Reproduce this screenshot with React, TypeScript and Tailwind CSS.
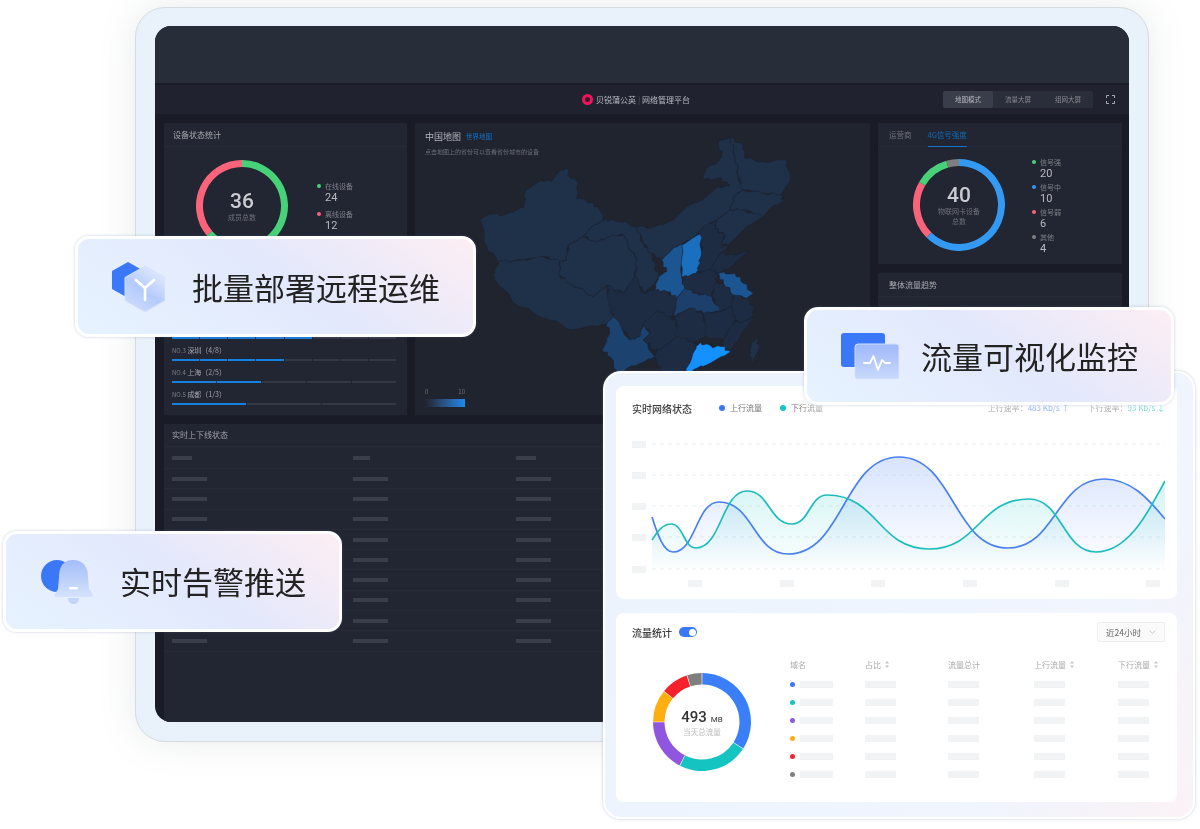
import React from "react";

// polar helpers for the ring charts
function arc(cx: number, cy: number, r: number, a0: number, a1: number) {
  const p = (a: number) => {
    const t = ((a - 90) * Math.PI) / 180;
    return `${(cx + r * Math.cos(t)).toFixed(2)} ${(cy + r * Math.sin(t)).toFixed(2)}`;
  };
  return `M ${p(a0)} A ${r} ${r} 0 ${a1 - a0 > 180 ? 1 : 0} 1 ${p(a1)}`;
}

function Ring({ size, width, parts, gap = 0 }: { size: number; width: number; parts: [number, number, string][]; gap?: number }) {
  const c = size / 2;
  const r = c - width / 2;
  return (
    <svg width={size} height={size} className="block">
      {parts.map(([a, b, color]) => (
        <path key={color} d={arc(c, c, r, a + gap, b - gap)} fill="none" stroke={color} strokeWidth={width} />
      ))}
    </svg>
  );
}

function smooth(pts: number[][]) {
  let d = `M ${pts[0][0]} ${pts[0][1]}`;
  for (let i = 1; i < pts.length; i++) {
    const [x0, y0] = pts[i - 1];
    const [x1, y1] = pts[i];
    const dx = x1 - x0;
    const dy = y1 - y0;
    const c1 = i === 1 ? [x0 + dx * 0.2, y0 + dy * 0.35] : [x0 + dx / 2, y0];
    const c2 = i === pts.length - 1 ? [x1 - dx * 0.2, y1 - dy * 0.35] : [x1 - dx / 2, y1];
    d += ` C ${c1[0]} ${c1[1]}, ${c2[0]} ${c2[1]}, ${x1} ${y1}`;
  }
  return d;
}

const blueLine = [[652, 517], [673, 552], [719, 502], [788, 554], [899, 457], [1008, 548], [1104, 479], [1165, 519]];
const tealLine = [[652, 540], [671, 524], [696, 548], [747, 491], [792, 524], [827, 495], [929, 549], [1029, 499], [1096, 552], [1165, 481]];

function TrafficChart() {
  return (
    <svg width={533} height={160} viewBox="632 430 533 160" className="block">
      <defs>
        <linearGradient id="blueFill" x1="0" y1="0" x2="0" y2="1">
          <stop offset="0" stopColor="#3b78f6" stopOpacity="0.2" />
          <stop offset="1" stopColor="#3b78f6" stopOpacity="0" />
        </linearGradient>
        <linearGradient id="tealFill" x1="0" y1="0" x2="0" y2="1">
          <stop offset="0" stopColor="#14c4c0" stopOpacity="0.18" />
          <stop offset="1" stopColor="#14c4c0" stopOpacity="0.01" />
        </linearGradient>
      </defs>
      {[444, 475, 506, 537, 569].map((y) => (
        <g key={y}>
          <rect x={632} y={y - 3} width={14} height={7} fill="#f2f3f5" />
          <line x1={652} x2={1165} y1={y} y2={y} stroke="#eceef1" strokeDasharray="4 4" />
        </g>
      ))}
      {[688, 780, 871, 963, 1055, 1146].map((x) => (
        <rect key={x} x={x} y={580} width={14} height={7} fill="#f2f3f5" />
      ))}
      <path d={`${smooth(blueLine)} L 1165 569 L 652 569 Z`} fill="url(#blueFill)" />
      <path d={`${smooth(tealLine)} L 1165 569 L 652 569 Z`} fill="url(#tealFill)" />
      <path d={smooth(blueLine)} fill="none" stroke="#4a80ee" strokeWidth={1.7} />
      <path d={smooth(tealLine)} fill="none" stroke="#1dbdbd" strokeWidth={1.7} />
    </svg>
  );
}

const base = "#1f3049";
const inner = "#1e2c43";
const provinces: [string, string][] = [
  ["210,295 245,282 280,285 340,262 348,210 395,180 425,185 445,155 470,145 480,170 505,185 500,235 550,248 575,280 582,300 545,320 520,350 475,375 470,420 450,425 400,410 340,420 265,425 230,380", base],
  ["265,425 340,420 400,410 450,425 448,465 480,490 550,530 590,495 600,560 610,590 590,610 490,630 420,600 330,560 260,490 250,470", base],
  ["475,375 520,350 560,365 610,345 640,345 680,420 675,470 640,520 590,495 550,530 480,490 448,465 450,425 470,420", base],
  ["582,300 610,300 680,320 700,370 725,400 735,440 745,470 735,490 700,520 675,470 680,420 640,345 610,345 560,365 520,350 545,320", base],
  ["680,320 730,322 790,300 830,260 875,240 925,200 960,200 935,175 880,178 885,145 920,130 935,110 925,65 960,52 975,110 985,170 1000,210 975,225 960,270 920,300 880,320 860,345 815,372 790,385 755,420 725,400 700,370", base],
  ["960,52 1000,75 1005,115 1060,125 1130,120 1140,180 1115,225 1060,220 1000,210 985,170 975,110", base],
  ["1000,210 1060,220 1115,225 1120,245 1085,260 1060,290 1000,270 960,270 975,225", base],
  ["960,270 1000,270 1060,290 1010,320 985,345 955,375 935,370 945,345 915,325 920,300", base],
  ["860,345 880,320 920,300 915,325 945,345 935,370 955,385 930,400 900,450 860,460 875,400 870,342", inner],
  ["870,342 875,400 865,440 860,460 815,472 815,375", "#1b6fbf"],
  ["815,372 815,472 825,505 800,535 770,515 735,510 745,470 770,455 755,420 790,385", "#1b5592"],
  ["930,400 970,405 1015,395 985,420 965,440 925,460 900,450", inner],
  ["860,460 900,450 925,460 915,490 905,530 860,520 825,505 815,472", inner],
  ["925,460 975,460 1000,490 1030,520 1010,535 970,525 940,490", "#1b5592"],
  ["915,490 940,490 970,525 965,560 930,575 905,530", inner],
  ["800,535 825,505 860,520 905,530 930,575 880,580 840,565 790,590", "#1c3f6c"],
  ["590,495 640,520 675,470 700,520 735,510 770,515 800,535 790,590 770,590 745,570 700,610 690,650 660,660 610,590 600,560", inner],
  ["610,590 660,660 690,650 700,610 720,640 700,660 735,710 690,730 650,745 630,770 600,710 577,690 600,640 590,610", "#1c4370"],
  ["700,610 745,570 770,590 800,600 800,650 750,690 735,690 700,660 720,640", inner],
  ["790,590 840,565 880,580 890,650 850,665 800,650 800,600", inner],
  ["880,580 930,575 965,560 975,600 940,660 890,650", inner],
  ["970,525 1010,535 1030,560 1030,590 990,610 975,600 965,560", inner],
  ["975,600 990,610 1030,590 990,650 960,695 935,680 940,660", inner],
  ["735,690 750,690 800,650 850,665 860,680 830,750 760,770 740,720", inner],
  ["872,668 905,680 935,680 962,695 900,730 860,745 820,770 845,715 858,680", "#1490ff"],
  ["1040,655 1048,680 1030,725 1018,710 1025,670", base],
];

// breaks each straight edge up a little so borders don't read as ruler lines
function rough(points: string) {
  const pts = points.split(" ").map((p) => p.split(",").map(Number));
  const out: string[] = [];
  pts.forEach(([x0, y0], i) => {
    const [x1, y1] = pts[(i + 1) % pts.length];
    out.push(`${x0},${y0}`);
    const seed = (x0 + x1) * 7 + (y0 + y1) * 13;
    [0.25, 0.5, 0.75].forEach((t, k) => {
      const n = Math.sin(seed + k * 2.1) * 4;
      out.push(`${(x0 + (x1 - x0) * t + n).toFixed(1)},${(y0 + (y1 - y0) * t - n).toFixed(1)}`);
    });
  });
  return out.join(" ");
}

function ChinaMap() {
  return (
    <svg width={400} height={300} viewBox="0 0 1200 900" className="absolute -left-[5px] -top-[3px]">
      {provinces.map(([pts, fill]) => (
        <polygon key={pts} points={rough(pts)} fill={fill} stroke="#1b2230" strokeWidth={1.6} strokeLinejoin="round" />
      ))}
    </svg>
  );
}

function HexIcon() {
  return (
    <svg width={53} height={50} viewBox="112 259 53 50" className="block shrink-0">
      <defs>
        <linearGradient id="hexGlass" x1="0.8" y1="0" x2="0.2" y2="1">
          <stop offset="0" stopColor="#e6edfd" />
          <stop offset="0.55" stopColor="#b4cbfb" />
          <stop offset="1" stopColor="#cfdcfb" />
        </linearGradient>
      </defs>
      <polygon points="128,259 144,268 144,286 128,295 112,286 112,268" fill="#3a78f7" />
      <polygon points="145,263 165,274.5 165,297.5 145,309 125,297.5 125,274.5" fill="url(#hexGlass)" stroke="#d6e2fc" />
      <path d="M136 277 L145 285 L154 277 M145 285 L145 297" fill="none" stroke="#fff" strokeWidth={2.6} strokeLinecap="round" />
    </svg>
  );
}

function BellIcon() {
  return (
    <svg width={52} height={44} viewBox="41 560 52 44" className="block shrink-0">
      <defs>
        <linearGradient id="bellGlass" x1="0" y1="0" x2="0" y2="1">
          <stop offset="0" stopColor="#a3bdf8" />
          <stop offset="1" stopColor="#d5e2fc" />
        </linearGradient>
      </defs>
      <circle cx={57} cy={576} r={16} fill="#3a78f7" />
      <path d="M73 560 C 83 560 88 567 88 577 L 89 589 L 93 595 Q 94 597 90 597 L 56 597 Q 53 597 55 594 L 58 589 L 59 577 C 59 567 63 560 73 560 Z" fill="url(#bellGlass)" />
      <path d="M68 598 H 79 C 79 606 68 606 68 598 Z" fill="#c3d4fb" />
      <rect x={69} y={587} width={9} height={2.6} rx={1.3} fill="#fff" />
    </svg>
  );
}

function PulseIcon() {
  return (
    <svg width={58} height={46} viewBox="841 334 58 46" className="block shrink-0">
      <defs>
        <linearGradient id="pulseGlass" x1="0" y1="0" x2="0" y2="1">
          <stop offset="0" stopColor="#9fb8f9" />
          <stop offset="1" stopColor="#c9dafc" />
        </linearGradient>
      </defs>
      <rect x={841} y={334} width={44} height={34} rx={3} fill="#3a78f7" />
      <rect x={855} y={345} width={44} height={35} rx={3} fill="url(#pulseGlass)" stroke="#d3e0fc" />
      <path d="M864 364 H 870 L 873.5 357 L 878 371 L 882 361 L 885 364 H 890" fill="none" stroke="#fff" strokeWidth={1.8} strokeLinejoin="round" strokeLinecap="round" />
    </svg>
  );
}

const cardClass =
  "absolute flex items-center rounded-[14px] border-[3px] border-white bg-[linear-gradient(35deg,#e6f3ff_0%,#e3e8fc_55%,#fdeef3_100%)] shadow-[0_0_3px_rgba(90,110,150,0.35)] text-[31px] text-[#222222]";

function Legend({ color, label, value }: { color: string; label: string; value: number }) {
  return (
    <div className="relative">
      <span className="absolute -left-[8px] top-[3px] h-[4px] w-[4px] rounded-full" style={{ backgroundColor: color }} />
      <div className="text-[7px] leading-[10px] text-[#7d8088]">{label}</div>
      <div className="mt-[1px] text-[11px] leading-[12px] text-[#b9bbc0] font-['Roboto',sans-serif]">{value}</div>
    </div>
  );
}

function Bars({ filled, total }: { filled: number; total: number }) {
  return (
    <div className="mt-[3px] flex gap-[1px]">
      {Array.from({ length: total }).map((_, i) => (
        <div key={i} className={i < filled ? "h-[2px] flex-1 bg-[#1580e0]" : "h-[2px] flex-1 bg-[#343843]"} />
      ))}
    </div>
  );
}

function RankRow({ no, name, filled, total }: { no: string; name: string; filled: number; total: number }) {
  return (
    <div>
      <div className="text-[7px] leading-[10px] text-[#a3a5ac]">
        <span className="text-[6px] text-[#7d8088]">{no}</span> {name}
      </div>
      <Bars filled={filled} total={total} />
    </div>
  );
}

function SortMark() {
  return (
    <svg width={4} height={7} viewBox="0 0 4 7" className="ml-[4px] inline-block">
      <path d="M2 0 L4 2.6 H0 Z M2 7 L0 4.4 H4 Z" fill="#c4c4c4" />
    </svg>
  );
}

const rows = [0, 1, 2, 3, 4, 5, 6, 7, 8];
const dots = ["#3a78f7", "#14c4c0", "#9156e0", "#ffae12", "#f5222d", "#7f7f7f"];

export default function App() {
  return (
    <div className="relative h-[829px] w-[1200px] overflow-hidden bg-white font-['Noto_Sans_CJK_SC',sans-serif] blur-[0.4px]">
      {/* tablet */}
      <div className="ml-[135px] mt-[7px] h-[735px] w-[1014px] rounded-[30px] border border-[#d6dbe0] bg-[#e9f1fa] px-[19px] py-[18px] shadow-[0_0_36px_rgba(120,130,135,0.16)]">
        <div className="flex h-[696px] flex-col overflow-hidden rounded-[16px] bg-[#191c27]">
          <div className="h-[57px] shrink-0 bg-[#282d3a]" />
          <div className="relative mt-[2px] flex h-[29px] shrink-0 items-center justify-center bg-[#20232f]">
            <div className="ml-[-12px] flex items-center text-[8px] text-[#b9bbc1]">
              <span className="mr-[3px] h-[11px] w-[11px] rounded-full border-[3px] border-[#f0145a] bg-[#3a1a2a]" />
              贝锐蒲公英 <span className="mx-[2px] text-[#555]">|</span> 网络管理平台
            </div>
            <div className="absolute right-[36px] top-[6px] flex h-[17px] w-[150px] rounded-[2px] bg-[#2a2e3a] text-[6.5px] text-[#888b92]">
              <div className="flex w-[50px] items-center justify-center rounded-[2px] bg-[#3a3e4a] text-[#b6b8bd]">地图模式</div>
              <div className="flex w-[50px] items-center justify-center">流量大屏</div>
              <div className="flex w-[50px] items-center justify-center">组网大屏</div>
            </div>
            <svg width={9} height={9} viewBox="0 0 9 9" className="absolute right-[14px] top-[10px]">
              <path d="M0.5 3V0.5H3M6 0.5H8.5V3M8.5 6V8.5H6M3 8.5H0.5V6" fill="none" stroke="#b9bbc1" strokeWidth={0.9} />
            </svg>
          </div>

          <div className="flex min-h-0 flex-1 flex-col gap-[9px] pl-[9px] pr-[7px] pt-[9px]">
            <div className="grid h-[292px] shrink-0 grid-cols-[243px_455px_244px] gap-x-[8px]">
              {/* device status */}
              <div className="flex flex-col bg-[#222632]">
                <div className="flex h-[24px] items-center border-b border-[#272b37] px-[9px] text-[8px] text-[#a8aab0]">设备状态统计</div>
                <div className="flex items-start pl-[32px] pt-[13px]">
                  <div className="relative">
                    <Ring size={92} width={7} parts={[[0, 230, "#47d27a"], [230, 360, "#f9647b"]]} />
                    <div className="absolute inset-0 flex flex-col items-center justify-center">
                      <div className="text-[21px] leading-[22px] font-medium text-[#c9cbd0] font-['Roboto',sans-serif]">36</div>
                      <div className="text-[7px] leading-[10px] text-[#6e7179]">成员总数</div>
                    </div>
                  </div>
                  <div className="ml-[37px] mt-[21px] flex flex-col gap-[5px]">
                    <Legend color="#47d27a" label="在线设备" value={24} />
                    <Legend color="#f9647b" label="离线设备" value={12} />
                  </div>
                </div>
                {/* the rows above NO.3 sit behind the floating label */}
                <div className="mt-auto flex flex-col gap-[6px] pb-[10px] pl-[8px] pr-[11px]">
                  <Bars filled={5} total={8} />
                  <RankRow no="NO.3" name="深圳（4/8）" filled={4} total={8} />
                  <RankRow no="NO.4" name="上海（2/5）" filled={2} total={5} />
                  <RankRow no="NO.5" name="成都（1/3）" filled={1} total={3} />
                </div>
              </div>

              {/* map */}
              <div className="relative flex flex-col bg-[#20242f] px-[10px] pt-[7px]">
                <ChinaMap />
                <div className="relative flex items-center gap-[5px]">
                  <span className="text-[9px] text-[#b3b5bb]">中国地图</span>
                  <span className="text-[6.5px] text-[#1172c9]">世界地图</span>
                </div>
                <div className="relative mt-[3px] text-[6px] text-[#6a6d75]">点击地图上的省份可以查看省份城市的设备</div>
                <div className="relative mt-auto mb-[8px] w-[40px]">
                  <div className="flex justify-between text-[6px] leading-[8px] text-[#6e7179]">
                    <span>0</span>
                    <span>10</span>
                  </div>
                  <div className="mt-[3px] h-[8px] bg-gradient-to-r from-[#20242f] to-[#168cf0]" />
                </div>
              </div>

              {/* signal + trend */}
              <div className="flex flex-col gap-[9px]">
                <div className="h-[141px] bg-[#222632]">
                  <div className="flex h-[24px] gap-[16px] border-b border-[#272b37] px-[11px] text-[7.5px] leading-[23px]">
                    <span className="text-[#6e7179]">运营商</span>
                    <span className="h-[24px] border-b border-[#1172c9] text-[#0f6cb8]">4G信号强度</span>
                  </div>
                  <div className="flex items-start pl-[35px] pt-[12px]">
                    <div className="relative">
                      <Ring size={92} width={7} parts={[[0, 225, "#3399f3"], [225, 300, "#f9647b"], [300, 344, "#47d27a"], [344, 360, "#7f7f7f"]]} />
                      <div className="absolute inset-0 flex flex-col items-center justify-center">
                        <div className="text-[21px] leading-[22px] font-medium text-[#c9cbd0] font-['Roboto',sans-serif]">40</div>
                        <div className="w-[44px] text-center text-[7px] leading-[10px] text-[#6e7179]">物联网卡设备总数</div>
                      </div>
                    </div>
                    <div className="ml-[35px] -mt-[2px] flex flex-col gap-[2px]">
                      <Legend color="#47d27a" label="信号强" value={20} />
                      <Legend color="#3399f3" label="信号中" value={10} />
                      <Legend color="#f9647b" label="信号弱" value={6} />
                      <Legend color="#7f7f7f" label="其他" value={4} />
                    </div>
                  </div>
                </div>
                <div className="flex-1 bg-[#222632]">
                  <div className="flex h-[24px] items-center border-b border-[#272b37] px-[11px] text-[8px] text-[#a8aab0]">整体流量趋势</div>
                </div>
              </div>
            </div>

            {/* online log */}
            <div className="flex-1 bg-[#222632]">
              <div className="flex h-[23px] items-center border-b border-[#272b37] px-[8px] text-[8px] text-[#a0a2a9]">实时上下线状态</div>
              <div className="grid h-[22px] grid-cols-[181px_163px_1fr] items-center border-b border-[#272b37] px-[8px]">
                <div className="h-[4px] w-[20px] bg-[#3a3e4a]" />
                <div className="h-[4px] w-[17px] bg-[#3a3e4a]" />
                <div className="h-[4px] w-[20px] bg-[#3a3e4a]" />
              </div>
              {rows.map((r) => (
                <div key={r} className="grid h-[20.3px] grid-cols-[181px_163px_1fr] items-center border-b border-[#272b37] px-[8px]">
                  <div className="h-[4px] w-[35px] bg-[#3a3e4a]" />
                  <div className="h-[4px] w-[35px] bg-[#3a3e4a]" />
                  <div className="h-[4px] w-[35px] bg-[#3a3e4a]" />
                </div>
              ))}
            </div>
          </div>
        </div>
      </div>

      {/* monitoring window lying over the tablet */}
      <div className="absolute left-[603px] top-[371px] flex h-[448px] w-[592px] flex-col gap-[14px] rounded-[18px] border-2 border-white bg-[linear-gradient(125deg,#ecf3fd_0%,#f0f5fe_75%,#fbf2f5_100%)] pb-[15px] pl-[11px] pr-[16px] pt-[13px] shadow-[0_0_3px_rgba(90,110,150,0.4)]">
        <div className="relative h-[213px] shrink-0 overflow-hidden rounded-[8px] bg-white px-[16px] pt-[14px]">
          <div className="flex h-[16px] items-center">
            <span className="text-[10px] font-medium text-[#3c3c3c]">实时网络状态</span>
            <span className="ml-[27px] h-[6px] w-[6px] rounded-full bg-[#3a78f7]" />
            <span className="ml-[5px] text-[8px] text-[#777]">上行流量</span>
            <span className="ml-[18px] h-[6px] w-[6px] rounded-full bg-[#14c4c0]" />
            <span className="ml-[5px] text-[8px] text-[#777]">下行流量</span>
            <span className="ml-auto text-[8px] text-[#777]">上行速率：<span className="text-[#3a78f7]">483 Kb/s ↑</span></span>
            <span className="ml-[18px] mr-[-4px] text-[8px] text-[#777]">下行速率：<span className="text-[#14c4c0]">93 Kb/s ↓</span></span>
          </div>
          <div className="mt-[14px]">
            <TrafficChart />
          </div>
          <div className="absolute left-[192px] -top-[28px] h-[50px] w-[380px] bg-white blur-[8px]" />
        </div>

        <div className="relative flex-1 rounded-[8px] bg-white pl-[16px] pr-[12px] pt-[9px]">
          <div className="flex h-[20px] items-center">
            <span className="text-[10px] font-medium text-[#3c3c3c]">流量统计</span>
            <span className="ml-[7px] flex h-[10px] w-[18px] items-center justify-end rounded-full bg-[#3a78f7] pr-[1.5px]">
              <span className="h-[7px] w-[7px] rounded-full bg-white" />
            </span>
            <span className="ml-auto flex h-[20px] w-[68px] items-center justify-between rounded-[2px] border border-[#eeeeee] bg-[#fafafa] pl-[8px] pr-[8px] text-[8.5px] text-[#666]">
              近24小时
              <svg width={7} height={4} viewBox="0 0 7 4">
                <path d="M0.5 0.5 L3.5 3.5 L6.5 0.5" fill="none" stroke="#bbb" strokeWidth={0.8} />
              </svg>
            </span>
          </div>
          <div className="flex">
            <div className="relative ml-[21px] mt-[31px] h-[98px] w-[98px] shrink-0">
              <Ring size={98} width={11.5} gap={0.4} parts={[[0, 123, "#3a7ef8"], [123, 207, "#14c4c0"], [207, 270, "#9156e0"], [270, 309, "#ffae12"], [309, 342, "#f5222d"], [342, 360, "#7f7f7f"]]} />
              <div className="absolute inset-0 flex flex-col items-center justify-center">
                <div className="flex items-baseline text-[#333]">
                  <span className="text-[15px] leading-[18px] font-medium font-['Roboto',sans-serif]">493</span>
                  <span className="ml-[4px] text-[8px] font-['Roboto',sans-serif]">MB</span>
                </div>
                <div className="mt-[1px] text-[7.5px] leading-[10px] text-[#bbb]">当天总流量</div>
              </div>
            </div>
            <div className="ml-[39px] mt-[12px] flex-1">
              <div className="grid h-[21px] grid-cols-[75px_83px_86px_84px_1fr] items-center text-[8px] text-[#aaa]">
                <span>域名</span>
                <span className="flex items-center">占比<SortMark /></span>
                <span>流量总计</span>
                <span className="flex items-center">上行流量<SortMark /></span>
                <span className="flex items-center">下行流量<SortMark /></span>
              </div>
              {dots.map((c) => (
                <div key={c} className="grid h-[18px] grid-cols-[75px_83px_86px_84px_1fr] items-center">
                  <div className="flex items-center">
                    <span className="h-[5px] w-[5px] rounded-full" style={{ backgroundColor: c }} />
                    <span className="ml-[5px] h-[7px] w-[33px] bg-[#f2f3f5]" />
                  </div>
                  <div className="h-[7px] w-[31px] bg-[#f2f3f5]" />
                  <div className="h-[7px] w-[31px] bg-[#f2f3f5]" />
                  <div className="h-[7px] w-[31px] bg-[#f2f3f5]" />
                  <div className="h-[7px] w-[31px] bg-[#f2f3f5]" />
                </div>
              ))}
            </div>
          </div>
        </div>
      </div>

      {/* floating labels */}
      <div className={`${cardClass} left-[75px] top-[236px] h-[101px] w-[401px] gap-[27px] pl-[34px]`}>
        <HexIcon />
        <span className="mt-[1px]">批量部署远程运维</span>
      </div>
      <div className={`${cardClass} left-[804px] top-[307px] h-[98px] w-[370px] gap-[22px] pl-[34px]`}>
        <PulseIcon />
        <span>流量可视化监控</span>
      </div>
      <div className={`${cardClass} left-[3px] top-[531px] h-[101px] w-[339px] gap-[27px] pl-[35px]`}>
        <BellIcon />
        <span>实时告警推送</span>
      </div>
    </div>
  );
}
